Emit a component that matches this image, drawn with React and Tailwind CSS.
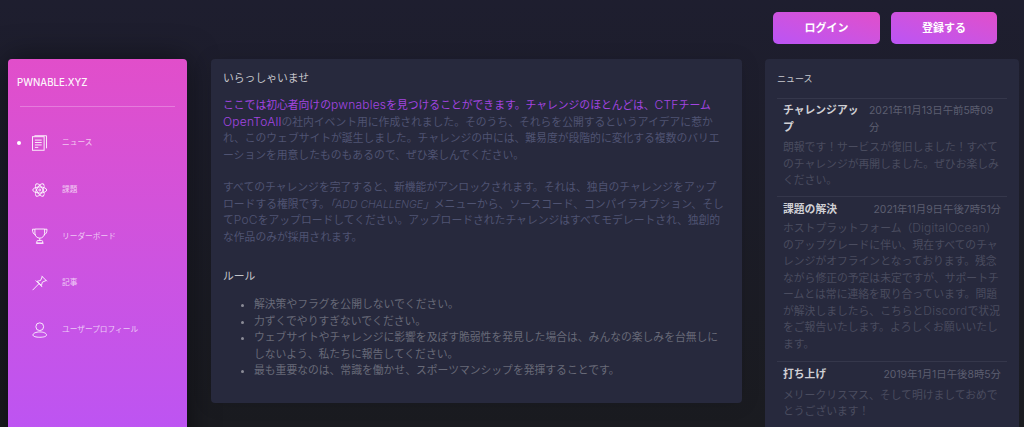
const font = { fontFamily: '"Inter","Noto Sans CJK JP",sans-serif' };

const icon = "w-[15.5px] h-[16px] text-white/90";
const NewsIcon = () => (
  <svg viewBox="0 0 16 16" className={icon} fill="none" stroke="currentColor" strokeWidth="1">
    <rect x="0.5" y="1.5" width="12" height="14" />
    <path d="M2.5 0.5H15V13.5M3 5h7M3 7.5h7M3 10h7M3 12.5h3.5" />
  </svg>
);
const AtomIcon = () => (
  <svg viewBox="0 0 16 16" className={icon} fill="none" stroke="currentColor" strokeWidth="1">
    <ellipse cx="8" cy="8" rx="7.2" ry="3.1" />
    <ellipse cx="8" cy="8" rx="7.2" ry="3.1" transform="rotate(60 8 8)" />
    <ellipse cx="8" cy="8" rx="7.2" ry="3.1" transform="rotate(120 8 8)" />
    <circle cx="8" cy="8" r="1" />
  </svg>
);
const TrophyIcon = () => (
  <svg viewBox="0 0 16 16" className={icon} fill="none" stroke="currentColor" strokeWidth="1">
    <path d="M3 .8h10v4.4a5 5 0 0 1-10 0zM3 1H.5c0 3.4 1 5 3.3 6M13 1h2.5c0 3.4-1 5-3.3 6M8 10.2v2.4M5 15.4v-1.6a1.2 1.2 0 0 1 1.2-1.2h3.6a1.2 1.2 0 0 1 1.2 1.2v1.6zM4 15.4h8" />
  </svg>
);
const PinIcon = () => (
  <svg viewBox="0 0 16 16" className={icon} fill="none" stroke="currentColor" strokeWidth="1">
    <path d="M9.8.6l5.6 5.6M10.6 1.4L8.8 5.4 5.4 6.2l4.4 4.4.8-3.4 4-1.8M3.8 5.4l6.8 6.8M7 8.9L.6 15.4" />
  </svg>
);
const UserIcon = () => (
  <svg viewBox="0 0 16 16" className={icon} fill="none" stroke="currentColor" strokeWidth="1">
    <circle cx="8" cy="4.6" r="4" />
    <path d="M1 13.2c0-1.8 3-3.2 7-3.2s7 1.4 7 3.2c0 1.4-3 2.3-7 2.3s-7-.9-7-2.3z" />
  </svg>
);

const nav = [
  { label: "ニュース", Icon: NewsIcon, active: true },
  { label: "課題", Icon: AtomIcon },
  { label: "リーダーボード", Icon: TrophyIcon },
  { label: "記事", Icon: PinIcon },
  { label: "ユーザープロフィール", Icon: UserIcon },
];

const L = ({ children }) => <span className="text-[12px] leading-none tracking-[0.2px] font-light">{children}</span>;

function Sidebar() {
  return (
    <aside className="w-[179px] h-[400px] shrink-0 rounded-t-[4px] bg-gradient-to-b from-[#e14eca] to-[#ba54f5] shadow-[0_0_30px_rgba(0,0,0,0.5)]">
      <div className="pl-[9px] pt-[17px] h-[47px] text-[9.7px] leading-[14px] font-medium text-white/95">PWNABLE.XYZ</div>
      <div className="mx-[12px] h-px bg-white/25 w-[155px]"></div>
      <ul className="pt-[12.5px] flex flex-col">
        {nav.map(({ label, Icon, active }) => (
          <li key={label} className="relative h-[46.75px] flex items-center pl-[24px]">
            {active && <span className="absolute left-[8.5px] top-[21px] w-[4.5px] h-[4.5px] rounded-full bg-white"></span>}
            <Icon />
            <span className="ml-[14.5px] text-[7.7px] text-white/70">{label}</span>
          </li>
        ))}
      </ul>
    </aside>
  );
}

function Main() {
  return (
    <main className="w-[531px] h-[344px] shrink-0 ml-[24px] rounded-[4px] bg-[#27293d] pt-[12px] pl-[12px] text-[10.8px] leading-[16.5px] text-[#4f5372] shadow-[0_1px_20px_rgba(0,0,0,0.1)]">
      <h2 className="text-[#c4c4ca] h-[27px]">いらっしゃいませ</h2>
      <p>
        <span className="text-[#a345e0]">ここでは初心者向けの<L>pwnables</L>を見つけることができます。チャレンジのほとんどは、<L>CTF</L>チーム<br /><L>OpenToAll</L></span>の社内イベント用に作成されました。そのうち、それらを公開するというアイデアに惹か<br />
        れ、このウェブサイトが誕生しました。チャレンジの中には、難易度が段階的に変化する複数のバリエ<br />
        ーションを用意したものもあるので、ぜひ楽しんでください。
      </p>
      <p className="mt-[16px]">
        すべてのチャレンジを完了すると、新機能がアンロックされます。それは、独自のチャレンジをアップ<br />
        ロードする権限です。<em>「<span className="text-[10.5px] leading-none font-light">ADD CHALLENGE</span>」</em>メニューから、ソースコード、コンパイラオプション、そし<br />
        て<L>PoC</L>をアップロードしてください。アップロードされたチャレンジはすべてモデレートされ、独創的<br />
        な作品のみが採用されます。
      </p>
      <h3 className="mt-[23px] h-[28px] text-[#c4c4ca]">ルール</h3>
      <ul className="list-disc pl-[31px] text-[#686a78] marker:text-[#8a8b96]">
        <li>解決策やフラグを公開しないでください。</li>
        <li>力ずくでやりすぎないでください。</li>
        <li>ウェブサイトやチャレンジに影響を及ぼす脆弱性を発見した場合は、みんなの楽しみを台無しに<br />しないよう、私たちに報告してください。</li>
        <li>最も重要なのは、常識を働かせ、スポーツマンシップを発揮することです。</li>
      </ul>
    </main>
  );
}

function NewsItem({ title, date, children, box, gap }) {
  return (
    <div className={`border-t border-[#35374b] px-[6px] ${box}`}>
      <div className="flex justify-between">
        <div className="font-bold text-[#d0d0d5] shrink-0">{title}</div>
        <div className="text-[#5c5e70] text-[10.4px] leading-[16.5px]">{date}</div>
      </div>
      <p className={`${gap} text-[#4a4c5f]`}>{children}</p>
    </div>
  );
}

function News() {
  return (
    <section className="w-[254px] h-[380px] shrink-0 ml-[23px] rounded-t-[4px] bg-[#27293d] pt-[13px] px-[12px] text-[10.8px] leading-[16.5px]">
      <h4 className="text-[9px] leading-[13px] h-[26px] text-[#c9c9cf]">ニュース</h4>
      <NewsItem box="pt-[4px] pb-[6px]" gap="mt-[4px]" title={<>チャレンジアッ<br />プ</>} date={<div className="w-[132px]">2021年11月13日午前5時09<br />分</div>}>
        朗報です！サービスが復旧しました！すべて<br />のチャレンジが再開しました。ぜひお楽しみ<br />ください。
      </NewsItem>
      <NewsItem box="pt-[5px] pb-[8px]" gap="mt-[3px]" title="課題の解決" date="2021年11月9日午後7時51分">
        ホストプラットフォーム（<L>DigitalOcean</L>）<br />のアップグレードに伴い、現在すべてのチャ<br />レンジがオフラインとなっております。残念<br />ながら修正の予定は未定ですが、サポートチ<br />ームとは常に連絡を取り合っています。問題<br />が解決しましたら、こちらと<L>Discord</L>で状況<br />をご報告いたします。よろしくお願いいたし<br />ます。
      </NewsItem>
      <NewsItem box="pt-[5px] pb-[6px]" gap="mt-[4px]" title="打ち上げ" date="2019年1月1日午後8時5分">
        メリークリスマス、そして明けましておめで<br />とうございます！
      </NewsItem>
    </section>
  );
}

export default function App() {
  return (
    <div style={font} className="h-[427px] w-[1024px] overflow-hidden bg-gradient-to-b from-[#1e1e2f] to-[#1a1b20]">
      <header className="h-[59px] flex pt-[12px] pl-[773px] gap-[11px]">
        <button className="w-[107px] h-[32px] rounded-[5px] bg-gradient-to-tr from-[#ba54f5] to-[#e14eca] text-white text-[11px] font-bold">ログイン</button>
        <button className="w-[106px] h-[32px] rounded-[5px] bg-gradient-to-tr from-[#ba54f5] to-[#e14eca] text-white text-[11px] font-bold">登録する</button>
      </header>
      <div className="flex pl-[8px]">
        <Sidebar />
        <Main />
        <News />
      </div>
    </div>
  );
}
